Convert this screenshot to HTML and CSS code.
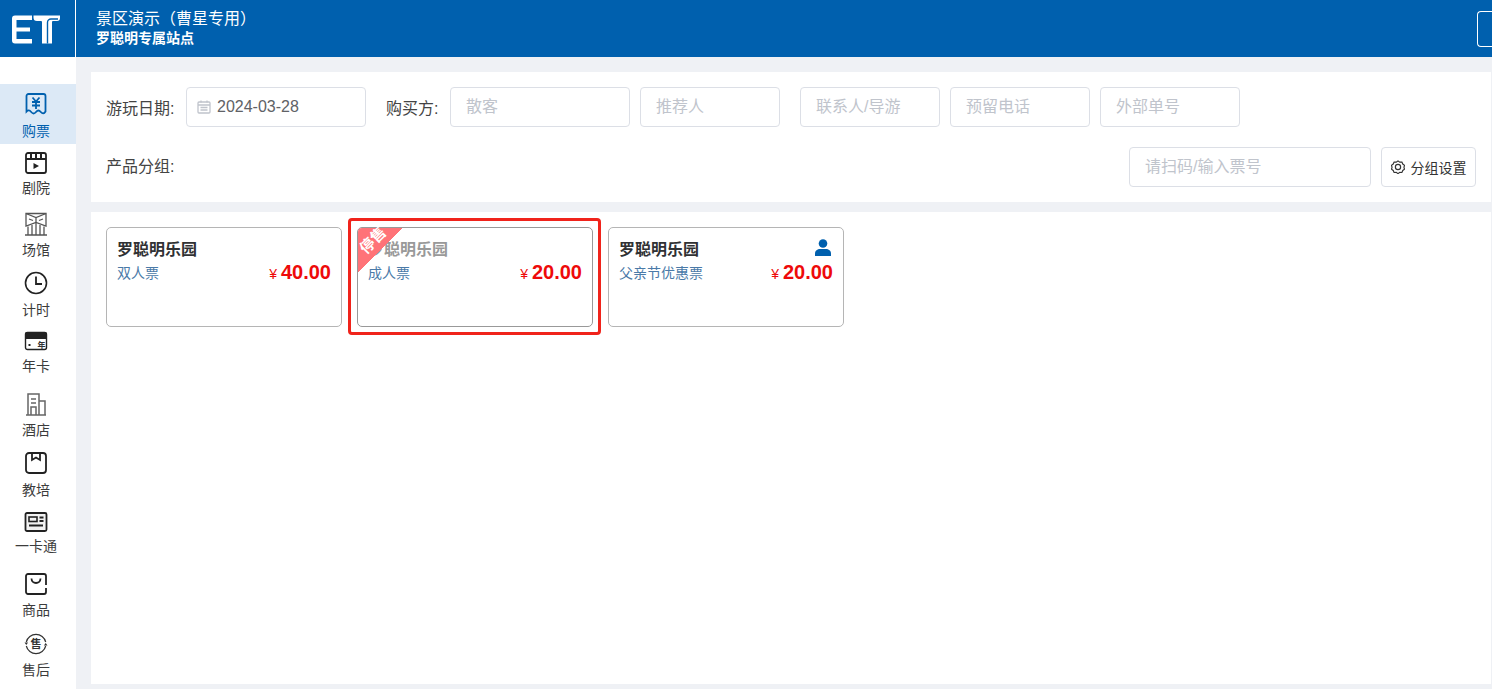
FILE: index.html
```html
<!DOCTYPE html>
<html lang="zh-CN">
<head>
  <meta charset="UTF-8" />
  <title>购票</title>
  <link rel="stylesheet" href="styles.css">
</head>
<body>

  <header class="topbar">
    <div class="logo">
      <svg width="50" height="30" viewBox="0 0 50 30">
        <path d="M4 1.500H21v4.500H5.500V13.500H19v4H5.500V25H21v4.500H4a3 3 0 0 1-3-3V4.500a3 3 0 0 1 3-3z" fill="#fff"/>
        <path d="M22.500 1.500H49V4a3 3 0 0 1-3 3H42a1 1 0 0 0-1 1V29.500H31V8a1 1 0 0 0-1-1H26a3.500 3.500 0 0 1-3.500-3.500z" fill="#fff"/>
        <path d="M36.500 29.500V8.500a3.500 3.500 0 0 1 3.500-3.500H47" fill="none" stroke="#0060ae" stroke-width="1.400"/>
      </svg>
    </div>
    <div class="site">
      <div class="site-name">景区演示（曹星专用）</div>
      <div class="site-owner">罗聪明专属站点</div>
    </div>
    <div class="top-btn"></div>
  </header>

  <div class="layout">
    <nav class="sidebar">
      <a class="nav-item nav-ticket active">
        <svg width="24" height="24" viewBox="0 0 24 24" fill="none" stroke="#0060ae" stroke-width="1.800">
          <path d="M2.500 19.500V4a2 2 0 0 1 2-2h15a2 2 0 0 1 2 2v15.500c-1.500 2.500-3 2.500-4.700.5s-3.100-2-4.800 0-3.100 2-4.800 0-3.200-2-4.700-.5z"/>
          <path d="M8.500 5.500 12 9.500l3.500-4M8 10h8M8 13.500h8M12 9.500V17" stroke-width="1.800"/>
        </svg>
        <span>购票</span>
      </a>
      <a class="nav-item nav-theatre">
        <svg width="24" height="24" viewBox="0 0 24 24" fill="none" stroke="#222" stroke-width="1.800">
          <rect x="2" y="2" width="20" height="20" rx="2"/>
          <path d="M2 8h20M7 2v6M12 2v6M17 2v6" stroke-width="2"/>
          <path d="M9.500 12l5.500 3-5.500 3z" fill="#222" stroke="none"/>
        </svg>
        <span>剧院</span>
      </a>
      <a class="nav-item nav-venue">
        <svg width="24" height="24" viewBox="0 0 24 24" fill="none" stroke="#555" stroke-width="1.300">
          <path d="M2 14V1.500h20V14l-10-3.500z"/>
          <path d="M2 1.500l10 4 10-4M12 5.500v5"/>
          <path d="M1 23h22M4 14.500V23M8 13V23M12 11v12M16 13V23M20 14.500V23M5 7l4 1.500M15 8.500l4-1.500"/>
        </svg>
        <span>场馆</span>
      </a>
      <a class="nav-item nav-timer">
        <svg width="24" height="24" viewBox="0 0 24 24" fill="none" stroke="#222" stroke-width="1.600">
          <circle cx="12" cy="12" r="10.500"/>
          <path d="M12 5.500V13h6" stroke-width="1.800"/>
        </svg>
        <span>计时</span>
      </a>
      <a class="nav-item nav-card">
        <svg width="24" height="24" viewBox="0 0 24 24">
          <rect x="1.500" y="3.500" width="21" height="17" rx="2" fill="none" stroke="#222" stroke-width="1.400"/>
          <path d="M1 5a2 2 0 0 1 2-2h18a2 2 0 0 1 2 2v5H1z" fill="#222"/>
          <rect x="4.500" y="15" width="2" height="2" fill="#222"/>
          <text x="17.500" y="19" text-anchor="middle" class="icon-glyph card-glyph">年</text>
        </svg>
        <span>年卡</span>
      </a>
      <a class="nav-item nav-hotel">
        <svg width="24" height="24" viewBox="0 0 24 24" fill="none" stroke="#666" stroke-width="1.500">
          <path d="M2 23h20M4 23V2h11v21M15 9h6v14M7 7h5M7 11h5M7 23v-8h5v8"/>
        </svg>
        <span>酒店</span>
      </a>
      <a class="nav-item nav-school">
        <svg width="24" height="24" viewBox="0 0 24 24" fill="none" stroke="#222" stroke-width="1.800">
          <rect x="2" y="2" width="20" height="20" rx="3"/>
          <path d="M8 2v7l4-2.500L16 9V2" stroke-width="1.800"/>
        </svg>
        <span>教培</span>
      </a>
      <a class="nav-item nav-idcard">
        <svg width="24" height="24" viewBox="0 0 24 24" fill="none" stroke="#222">
          <rect x="1.500" y="3" width="21" height="18" rx="1.500" fill="#f2f2f2" stroke-width="1.800"/>
          <rect x="5" y="7" width="8" height="4.500" stroke-width="1.600"/>
          <path d="M15.500 7.500h4M15.500 11h4M5 15.500h14" stroke-width="1.800"/>
        </svg>
        <span>一卡通</span>
      </a>
      <a class="nav-item nav-goods">
        <svg width="24" height="24" viewBox="0 0 24 24" fill="none" stroke="#222" stroke-width="1.800">
          <path d="M22 16v4a2 2 0 0 1-2 2H4a2 2 0 0 1-2-2V4a2 2 0 0 1 2-2h16a2 2 0 0 1 2 2v9"/>
          <path d="M7.500 6.500c0 6 9 6 9 0"/>
        </svg>
        <span>商品</span>
      </a>
      <a class="nav-item nav-service">
        <svg width="24" height="24" viewBox="0 0 24 24" fill="none" stroke="#333" stroke-width="1.200">
          <path d="M2.300 10a10 10 0 0 1 19.400 0M21.700 14a10 10 0 0 1-19.400 0"/>
          <path d="M0.500 10.500h3.600L2.300 13zM23.500 13.500h-3.600l1.800-2.500z" fill="#333" stroke="none"/>
          <text x="12" y="16" text-anchor="middle" class="icon-glyph">售</text>
        </svg>
        <span>售后</span>
      </a>
    </nav>

    <main class="main">
      <section class="panel filters">
        <div class="filter-row">
          <label class="filter-label">游玩日期:</label>
          <div class="field field-date">
            <svg width="14" height="14" viewBox="0 0 14 14" fill="none" stroke="#c0c4cc" stroke-width="1.300">
              <rect x="1" y="2" width="12" height="11" rx="1"/>
              <path d="M1 5h12M3.500 7.500h7M3.500 10h7M4 .500v2M10 .500v2"/>
            </svg>
            <span>2024-03-28</span>
          </div>
          <label class="filter-label label-buyer">购买方:</label>
          <input class="field field-buyer" placeholder="散客">
          <input class="field field-short" placeholder="推荐人">
          <input class="field field-short gap-left" placeholder="联系人/导游">
          <input class="field field-short" placeholder="预留电话">
          <input class="field field-short" placeholder="外部单号">
        </div>
        <div class="filter-row">
          <label class="filter-label label-group">产品分组:</label>
          <input class="field field-scan" placeholder="请扫码/输入票号">
          <button class="group-btn">
            <svg width="14" height="14" viewBox="0 0 24 24" fill="none" stroke="#333" stroke-width="2">
              <path d="M12 1.500l3 2.200 3.700-.2 1.500 3.400 3 2.200-1 3.500 1 3.200-3 2.200-1.500 3.400-3.700-.2-3 2.200-3-2.200-3.700.2-1.500-3.400-3-2.200 1-3.200-1-3.500 3-2.200 1.500-3.400 3.700.2z"/>
              <circle cx="12" cy="12" r="4.500"/>
            </svg>
            分组设置
          </button>
        </div>
      </section>

      <section class="panel products">
        <div class="product">
          <div class="product-row">
            <div class="product-name">罗聪明乐园</div>
          </div>
          <div class="product-row">
            <div class="product-type">双人票</div>
            <div class="price"><small>¥</small>40.00</div>
          </div>
        </div>

        <div class="product stopped selected">
          <div class="ribbon"><span>停售</span></div>
          <div class="product-row">
            <div class="product-name">罗聪明乐园</div>
          </div>
          <div class="product-row">
            <div class="product-type">成人票</div>
            <div class="price"><small>¥</small>20.00</div>
          </div>
        </div>

        <div class="product">
          <div class="product-row">
            <div class="product-name">罗聪明乐园</div>
            <svg class="person" width="16" height="17" viewBox="0 0 16 17" fill="#0060ae">
              <circle cx="8" cy="4.500" r="4.300"/>
              <path d="M0 17v-2.500c0-3 2.500-4.500 5-4.500h6c2.500 0 5 1.500 5 4.500V17z"/>
            </svg>
          </div>
          <div class="product-row">
            <div class="product-type">父亲节优惠票</div>
            <div class="price"><small>¥</small>20.00</div>
          </div>
        </div>
      </section>
    </main>
  </div>

</body>
</html>
```

FILE: styles.css
```css
*, *::after {
  box-sizing: border-box;
}

html, body {
  height: 100%;
}

body {
  margin: 0;
  overflow: hidden;
  font-family: "Liberation Sans", "Noto Sans CJK SC", sans-serif;
  font-size: 14px;
  background: #eff1f5;
  color: #333;
}

/* top bar */
.topbar {
  display: flex;
  align-items: center;
  height: 57px;
  background: #0060ae;
  color: #fff;
}

.logo {
  display: flex;
  align-items: center;
  justify-content: center;
  flex: none;
  width: 76px;
  height: 100%;
  padding-right: 4px;
  border-right: 1px solid #fff;
}

.site {
  margin: -1px 0 0 20px;
}

.site-name {
  font-size: 16px;
  line-height: 20px;
}

.site-owner {
  font-size: 14px;
  line-height: 18px;
  font-weight: bold;
}

.top-btn {
  flex: none;
  width: 15px;
  height: 36px;
  margin-left: auto;
  border: 1px solid #fff;
  border-right: none;
  border-radius: 4px 0 0 4px;
}

.layout {
  display: flex;
  height: calc(100% - 57px);
}

/* left menu */
.sidebar {
  flex: none;
  width: 76px;
  padding-top: 27px;
  background: #fff;
}

.nav-item {
  display: flex;
  flex-direction: column;
  align-items: center;
  justify-content: flex-end;
  padding: 0 4px 3px 0;
  color: #3c3c3c;
}

.nav-item span {
  line-height: 20px;
}

.nav-item.active {
  background: #dce9f6;
  color: #0060ae;
}

.nav-ticket { height: 60px; }
.nav-ticket svg { margin-bottom: 5px; }
.nav-theatre { height: 57px; }
.nav-theatre svg { margin-bottom: 3px; }
.nav-venue { height: 62px; }
.nav-venue svg { margin-bottom: 4px; }
.nav-timer { height: 60px; }
.nav-timer svg { margin-bottom: 5px; }
.nav-card { height: 56px; }
.nav-card svg { margin-bottom: 3px; }
.nav-hotel { height: 64px; }
.nav-hotel svg { margin-bottom: 4px; }
.nav-school { height: 60px; }
.nav-school svg { margin-bottom: 5px; }
.nav-idcard { height: 56px; }
.nav-idcard svg { margin-bottom: 2px; }
.nav-goods { height: 64px; }
.nav-goods svg { margin-bottom: 4px; }
.nav-service { height: 60px; }
.nav-service svg { margin-bottom: 4px; }

.icon-glyph {
  font-size: 11px;
  font-weight: bold;
  fill: #333;
  stroke: none;
}

.card-glyph {
  font-size: 8px;
}

/* content */
.main {
  display: flex;
  flex-direction: column;
  flex: 1;
  gap: 10px;
  padding: 15px 1px 5px 15px;
  min-width: 0;
}

.panel {
  background: #fff;
}

.filters {
  display: flex;
  flex-direction: column;
  gap: 20px;
  height: 130px;
  padding: 15px 15px 0 15px;
}

.filter-row {
  display: flex;
  align-items: center;
  gap: 10px;
  height: 40px;
}

.filter-label {
  flex: none;
  width: 70px;
  font-size: 16px;
  color: #444;
  white-space: nowrap;
}

.label-buyer {
  width: 54px;
  margin-left: 10px;
}

.label-group {
  margin-bottom: 4px;
}

.field {
  flex: none;
  height: 40px;
  padding: 0 15px;
  border: 1px solid #dcdfe6;
  border-radius: 4px;
  background: #fff;
  font-family: inherit;
  font-size: 16px;
  color: #606266;
  outline: none;
}

.field::placeholder {
  color: #c0c4cc;
  opacity: 1;
}

.field-date {
  display: flex;
  align-items: center;
  gap: 6px;
  width: 180px;
  padding-left: 10px;
}

.field-buyer {
  width: 180px;
}

.field-short {
  width: 140px;
}

.gap-left {
  margin-left: 10px;
}

.field-scan {
  width: 242px;
  margin-left: auto;
}

.group-btn {
  display: flex;
  align-items: center;
  justify-content: center;
  gap: 6px;
  flex: none;
  width: 95px;
  height: 40px;
  padding: 0;
  border: 1px solid #dcdfe6;
  border-radius: 4px;
  background: #fff;
  font-family: inherit;
  font-size: 14px;
  color: #333;
}

.products {
  display: flex;
  align-items: flex-start;
  flex: 1;
  gap: 15px;
  padding: 15px;
}

/* ticket cards */
.product {
  position: relative;
  flex: none;
  width: 236px;
  height: 100px;
  padding: 11px 10px;
  border: 1px solid #b5b5b5;
  border-radius: 5px;
  background: #fff;
}

.product-row {
  display: flex;
  justify-content: space-between;
  align-items: flex-start;
}

.product-name {
  font-size: 16px;
  line-height: 22px;
  font-weight: bold;
  color: #303133;
}

.product-type {
  font-size: 14px;
  line-height: 24px;
  color: #4a7aa8;
}

.price {
  font-size: 20px;
  line-height: 22px;
  font-weight: bold;
  color: #ee0a0a;
}

.price small {
  margin-right: 4px;
  font-size: 14px;
  font-weight: normal;
}

.stopped .product-name {
  color: #999;
}

.selected {
  border-color: #999;
}

.selected::after {
  content: "";
  position: absolute;
  top: -10px;
  left: -10px;
  width: 253px;
  height: 117px;
  border: 3px solid #f0231b;
  border-radius: 4px;
}

.ribbon {
  position: absolute;
  top: 0;
  left: 0;
  width: 45px;
  height: 45px;
  border-top-left-radius: 4px;
  background: linear-gradient(135deg, #ff7378 50%, transparent 50%);
}

.ribbon span {
  position: absolute;
  top: 1px;
  left: -1px;
  transform: rotate(-45deg);
  font-size: 15px;
  font-weight: bold;
  color: #fff;
}

.person {
  flex: none;
  margin-right: 2px;
}
```
